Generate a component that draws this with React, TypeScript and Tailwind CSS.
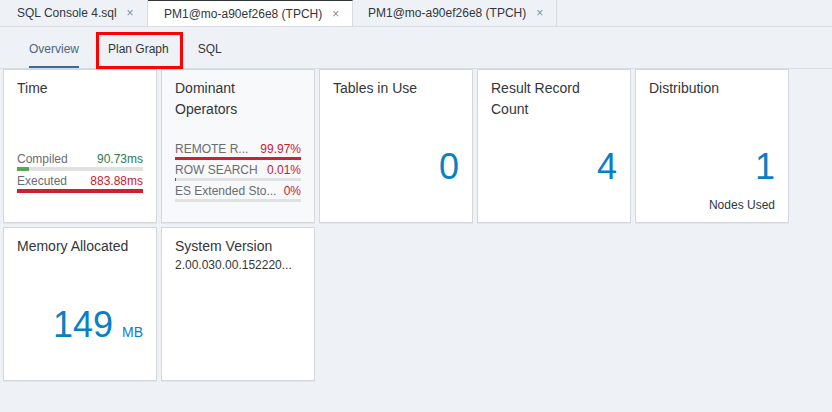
import React from 'react';

const blue = 'text-[#0b7fc4]';

function Bar({ pct, color, h }: { pct: number; color: string; h: string }) {
  return (
    <div className={`w-full bg-[#e1e1e1] ${h}`}>
      <div className={`h-full ${color}`} style={{ width: `${pct}%` }} />
    </div>
  );
}

function Row({ label, value, valueColor, pct, barColor, h }: any) {
  return (
    <div className="mb-[2px]">
      <div className="flex justify-between text-[12px] leading-[16px]">
        <span className="text-[#6a6d70] whitespace-nowrap">{label}</span>
        <span className={`${valueColor} whitespace-nowrap`}>{value}</span>
      </div>
      <Bar pct={pct} color={barColor} h={h} />
    </div>
  );
}

function Card({ title, children, className = '' }: { title: React.ReactNode; children?: React.ReactNode; className?: string }) {
  return (
    <div className={`flex flex-col h-[154px] border border-[#d3d6da] shadow-[0_1px_0_#e2e5e9] pt-[8px] px-[13px] pb-[9px] ${className || 'bg-white'}`}>
      <div className="text-[14px] leading-[21px] text-[#32363a]">{title}</div>
      {children}
    </div>
  );
}

function BigValue({ value, unit, footer }: { value: string; unit?: string; footer?: string }) {
  return (
    <>
      <div className={`mt-auto flex items-baseline justify-end ${blue}`}>
        <span className="text-[36px] leading-[40px]">{value}</span>
        {unit && <span className="text-[14px] ml-[9px]">{unit}</span>}
      </div>
      <div className="h-[16px] mt-[10px] text-[12px] leading-[16px] text-right text-[#32363a]">{footer}</div>
    </>
  );
}

function Tab({ label, active, w, pl }: { label: string; active?: boolean; w: string; pl: string }) {
  return (
    <div
      className={`h-full flex items-center border-r border-[#d9dde3] ${w} ${pl} ${
        active ? 'bg-white border-t border-t-[#32363a]' : ''
      }`}
    >
      <span className="text-[12px] text-[#32363a] whitespace-nowrap">{label}</span>
      <span className="ml-[10px] text-[12px] text-[#8a8d90]">×</span>
    </div>
  );
}

export default function App() {
  return (
    <div className="w-[832px] h-[412px] bg-[#eef2f7] overflow-hidden font-['Liberation_Sans']">
      {/* abas de arquivos */}
      <div className="h-[27px] flex border-b border-[#d9dde3]">
        <Tab label="SQL Console 4.sql" w="w-[148px]" pl="pl-[17px]" />
        <Tab label="PM1@mo-a90ef26e8 (TPCH)" w="w-[205px]" pl="pl-[16px]" active />
        <Tab label="PM1@mo-a90ef26e8 (TPCH)" w="w-[204px]" pl="pl-[15px]" />
      </div>

      {/* sub abas */}
      <div className="relative h-[42px] flex pl-[29px] gap-[29px] border-b border-[#d7dde4] text-[12px]">
        <div className="h-full flex items-center border-b-2 border-[#41698f] text-[#4d6680] pt-[4px]">Overview</div>
        <div className="h-full flex items-center text-[#32363a] pt-[2px]">Plan Graph</div>
        <div className="h-full flex items-center text-[#32363a] pt-[2px]">SQL</div>
        <div className="absolute left-[96px] top-[5px] w-[87px] h-[37px] border-[3px] border-[#ff0000]" />
      </div>

      <div className="grid grid-cols-[repeat(5,154px)] gap-[4px] pl-[3px]">
        <Card title="Time">
          <div className="mt-auto mb-[18px]">
            <Row label="Compiled" value="90.73ms" valueColor="text-[#2b7d4f]" pct={9.5} barColor="bg-[#5ca65c]" h="h-[4px]" />
            <Row label="Executed" value="883.88ms" valueColor="text-[#c9202f]" pct={100} barColor="bg-[#d0202e]" h="h-[4px]" />
          </div>
        </Card>

        <Card title={<>Dominant<br />Operators</>} className="bg-[#f7f9fb]">
          <div className="mt-[21px]">
            <Row label="REMOTE R..." value="99.97%" valueColor="text-[#c9202f]" pct={100} barColor="bg-[#d0202e]" h="h-[3px]" />
            <Row label="ROW SEARCH" value="0.01%" valueColor="text-[#c9202f]" pct={1} barColor="bg-[#d0202e]" h="h-[3px]" />
            <Row label="ES Extended Sto..." value="0%" valueColor="text-[#c9202f]" pct={0} barColor="bg-[#d0202e]" h="h-[3px]" />
          </div>
        </Card>

        <Card title="Tables in Use">
          <BigValue value="0" />
        </Card>

        <Card title={<>Result Record<br />Count</>}>
          <BigValue value="4" />
        </Card>

        <Card title="Distribution">
          <BigValue value="1" footer="Nodes Used" />
        </Card>

        <Card title="Memory Allocated">
          <BigValue value="149" unit="MB" />
        </Card>

        <Card title="System Version">
          <div className="text-[12px] leading-[16px] text-[#32363a] whitespace-nowrap">2.00.030.00.152220...</div>
        </Card>
      </div>
    </div>
  );
}
